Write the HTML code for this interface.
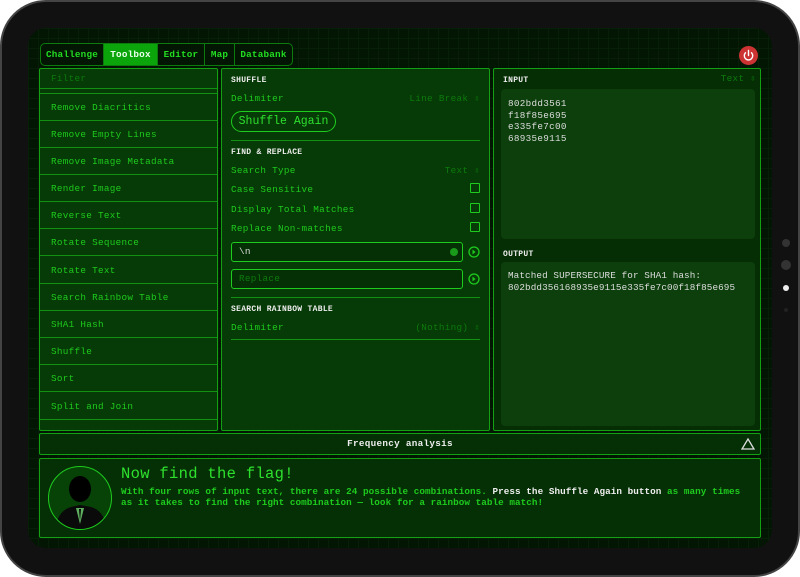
<!DOCTYPE html>
<html><head><style>
*{box-sizing:border-box;margin:0;padding:0}
body{width:800px;height:577px;background:#fff;position:relative;overflow:hidden;font-family:"Liberation Mono",monospace;font-size:9.3px;letter-spacing:0.3px;color:#1ed41e}
.dev{position:absolute;left:0;top:0;width:800px;height:577px;border-radius:46px;background:#111;border:2px solid #444}
.scr{position:absolute;left:28px;top:28px;width:744px;height:520px;border-radius:18px;background:#031503;
background-image:linear-gradient(#061f06 1px,transparent 1px),linear-gradient(90deg,#061f06 1px,transparent 1px);background-size:10px 10px}
.abs{position:absolute}
.tabs{left:40px;top:43px;height:23px;width:253px;border:1px solid #0c7a0c;border-radius:5px;display:flex;overflow:hidden;background:#031503}
.tabs div{font-weight:bold;color:#22dd22;line-height:21px;border-right:1px solid #0c7a0c;letter-spacing:0.2px;text-align:center}
.tabs div.on{background:#0ba40b;color:#eaffea}
.pan{border:1px solid #13a013;background:#063a06;border-radius:2px}
.item{position:absolute;left:11px;color:#1ecb1e}
.sep{position:absolute;left:0;right:0;height:1px;background:#119011}
.lab{color:#eee;font-weight:bold;font-size:8px;position:absolute;left:9px}
.row{position:absolute;left:9px;right:9px;color:#1ecb1e}
.row .r{position:absolute;right:0;top:0;color:#0d7a0d}
.cb{position:absolute;right:0;top:-1px;width:10px;height:10px;border:1px solid #1ecb1e;border-radius:1px}
.hl{position:absolute;left:9px;right:9px;height:1px;background:#119011}
</style></head><body>
<div class="dev"></div>
<div class="scr"></div>
<div class="abs tabs"><div style="width:63px">Challenge</div><div class="on" style="width:54px">Toolbox</div><div style="width:47px">Editor</div><div style="width:30px">Map</div><div style="width:57px;border:none">Databank</div></div>
<div class="abs" style="left:739px;top:46px;width:19px;height:19px;border-radius:50%;background:#c33;"><svg width="19" height="19" viewBox="0 0 19 19"><path d="M6.5 6.8a4.2 4.2 0 1 0 6 0M9.5 4.5v5" stroke="#fff" stroke-width="1.4" fill="none" stroke-linecap="round"/></svg></div>

<div class="abs pan" style="left:39px;top:68px;width:179px;height:363px">
<div class="item" style="top:4px;color:#0d7a0d">Filter</div>
<div class="sep" style="top:19px"></div><div class="sep" style="top:24px"></div>
<div class="item" style="top:33px">Remove Diacritics</div><div class="sep" style="top:51px"></div>
<div class="item" style="top:60px">Remove Empty Lines</div><div class="sep" style="top:78px"></div>
<div class="item" style="top:87px">Remove Image Metadata</div><div class="sep" style="top:105px"></div>
<div class="item" style="top:114px">Render Image</div><div class="sep" style="top:132px"></div>
<div class="item" style="top:141px">Reverse Text</div><div class="sep" style="top:159px"></div>
<div class="item" style="top:168px">Rotate Sequence</div><div class="sep" style="top:186px"></div>
<div class="item" style="top:196px">Rotate Text</div><div class="sep" style="top:214px"></div>
<div class="item" style="top:223px">Search Rainbow Table</div><div class="sep" style="top:241px"></div>
<div class="item" style="top:250px">SHA1 Hash</div><div class="sep" style="top:268px"></div>
<div class="item" style="top:277px">Shuffle</div><div class="sep" style="top:295px"></div>
<div class="item" style="top:304px">Sort</div><div class="sep" style="top:322px"></div>
<div class="item" style="top:332px">Split and Join</div><div class="sep" style="top:350px"></div>
</div>

<div class="abs pan" style="left:221px;top:68px;width:269px;height:363px">
<div class="lab" style="top:7px">SHUFFLE</div>
<div class="row" style="top:24px">Delimiter<span class="r">Line Break ⇳</span></div>
<div class="abs" style="left:9px;top:42px;width:105px;height:21px;border:1px solid #1ecb1e;border-radius:11px;color:#2ee02e;font-size:11.5px;letter-spacing:0;line-height:19px;text-align:center">Shuffle Again</div>
<div class="hl" style="top:71px"></div>
<div class="lab" style="top:79px">FIND &amp; REPLACE</div>
<div class="row" style="top:96px">Search Type<span class="r">Text ⇳</span></div>
<div class="row" style="top:115px">Case Sensitive<span class="cb"></span></div>
<div class="row" style="top:135px">Display Total Matches<span class="cb"></span></div>
<div class="row" style="top:154px">Replace Non-matches<span class="cb"></span></div>
<div class="abs" style="left:9px;top:173px;width:232px;height:20px;border:1px solid #1ecb1e;border-radius:3px;background:#053005;color:#ddd;padding-left:7px;line-height:18px">\n<span style="position:absolute;right:4px;top:5px;width:8px;height:8px;border-radius:50%;background:#1a9a1a"></span></div>
<div class="abs" style="left:9px;top:200px;width:232px;height:20px;border:1px solid #1ecb1e;border-radius:3px;background:#053005;color:#0d7a0d;padding-left:7px;line-height:18px">Replace</div>
<svg class="abs" style="left:246px;top:177px" width="12" height="12"><circle cx="6" cy="6" r="5" stroke="#1ecb1e" fill="none" stroke-width="1.3"/><path d="M4.5 3.5l3 2.5-3 2.5z" fill="#1ecb1e"/></svg>
<svg class="abs" style="left:246px;top:204px" width="12" height="12"><circle cx="6" cy="6" r="5" stroke="#1ecb1e" fill="none" stroke-width="1.3"/><path d="M4.5 3.5l3 2.5-3 2.5z" fill="#1ecb1e"/></svg>
<div class="hl" style="top:228px"></div>
<div class="lab" style="top:236px">SEARCH RAINBOW TABLE</div>
<div class="row" style="top:253px">Delimiter<span class="r">(Nothing) ⇳</span></div>
<div class="hl" style="top:270px"></div>
</div>

<div class="abs pan" style="left:493px;top:68px;width:268px;height:363px;background:#052e05">
<div class="lab" style="top:7px">INPUT</div>
<div class="abs" style="right:4px;top:4px;color:#0d7a0d">Text ⇳</div>
<div class="abs" style="left:7px;top:20px;width:254px;height:150px;background:#0c3f0c;border-radius:4px;color:#ddd;padding:9px 7px;line-height:11.5px">802bdd3561<br>f18f85e695<br>e335fe7c00<br>68935e9115</div>
<div class="lab" style="top:181px">OUTPUT</div>
<div class="abs" style="left:7px;top:193px;width:254px;height:164px;background:#0c3f0c;border-radius:4px;color:#ddd;padding:8px 7px;line-height:11.5px;letter-spacing:0.1px">Matched SUPERSECURE for SHA1 hash:<br>802bdd356168935e9115e335fe7c00f18f85e695</div>
</div>

<div class="abs pan" style="left:39px;top:433px;width:722px;height:22px;background:#053005;color:#eee;font-weight:bold;text-align:center;line-height:20px">Frequency analysis
<svg class="abs" style="right:5px;top:4px" width="14" height="12"><path d="M7 1L13 11H1z" stroke="#ddd" stroke-width="1.3" fill="none"/></svg></div>

<div class="abs pan" style="left:39px;top:458px;width:722px;height:80px;background:#053005">
<div class="abs" style="left:8px;top:7px;width:64px;height:64px;border-radius:50%;border:1px solid #1ecb1e;overflow:hidden;background:#074207">
<svg width="64" height="64"><ellipse cx="31" cy="22" rx="11" ry="13" fill="#000"/><path d="M6 64 Q8 44 22 40 L31 38 L42 40 Q56 44 58 64z" fill="#0a0a0a"/><path d="M27 41l4 16 4-16z" fill="#5fb05f"/><path d="M30 42l1 12 1-12z" fill="#000"/></svg></div>
<div class="abs" style="left:81px;top:6px;font-size:15.5px;color:#2ee02e">Now find the flag!</div>
<div class="abs" style="left:81px;top:27px;width:636px;font-weight:bold;color:#1ecb1e;line-height:11px;letter-spacing:0.05px">With four rows of input text, there are 24 possible combinations. <span style="color:#eee">Press the Shuffle Again button</span> as many times as it takes to find the right combination — look for a rainbow table match!</div>
</div>

<div class="abs" style="left:782px;top:239px;width:8px;height:8px;border-radius:50%;background:#333"></div>
<div class="abs" style="left:781px;top:260px;width:10px;height:10px;border-radius:50%;background:#333"></div>
<div class="abs" style="left:783px;top:285px;width:6px;height:6px;border-radius:50%;background:#eee"></div>
<div class="abs" style="left:784px;top:308px;width:4px;height:4px;border-radius:50%;background:#222"></div>
</body></html>
